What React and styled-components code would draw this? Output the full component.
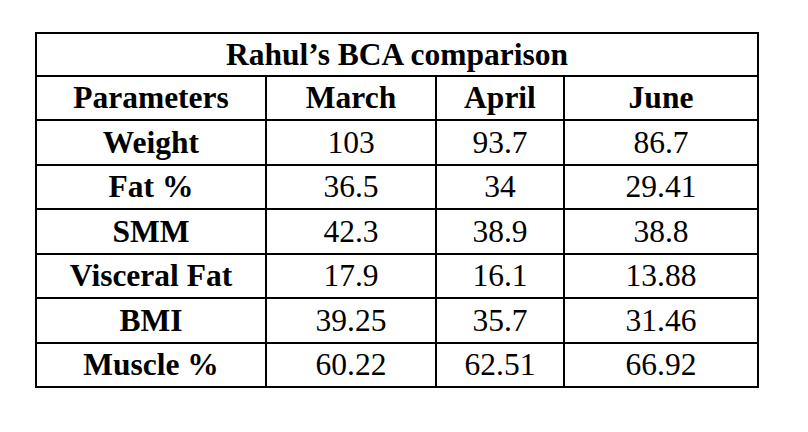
import React from "react";
import styled, { createGlobalStyle } from "styled-components";

const GlobalStyle = createGlobalStyle`
  html, body {
    margin: 0;
    padding: 0;
    background: #fff;
  }
  body {
    font-family: "Liberation Serif", "Times New Roman", serif;
    color: #000;
  }
`;

const Page = styled.div`
  padding: 32px 0 0 35px;
`;

const Table = styled.table`
  border-collapse: collapse;
  table-layout: fixed;
  width: 724px;
  border: 2px solid #000;
  font-size: 31.5px;
`;

const Cell = styled.td`
  border: 2px solid #000;
  height: ${({ tall }) => (tall ? "42.5px" : "42px")};
  padding: 0;
  text-align: center;
  vertical-align: middle;
  line-height: 1;
  font-weight: ${({ bold }) => (bold ? 700 : 400)};
`;

const TitleCell = styled.th`
  border: 2px solid #000;
  height: 41px;
  padding: 0;
  text-align: center;
  font-weight: 700;
  line-height: 1;
`;

const columns = ["Parameters", "March", "April", "June"];

const rows = [
  ["Weight", "103", "93.7", "86.7"],
  ["Fat %", "36.5", "34", "29.41"],
  ["SMM", "42.3", "38.9", "38.8"],
  ["Visceral Fat", "17.9", "16.1", "13.88"],
  ["BMI", "39.25", "35.7", "31.46"],
  ["Muscle %", "60.22", "62.51", "66.92"],
];

const widths = [230, 170, 128, 194];

const App = () => {
  return (
    <Page>
      <GlobalStyle />
      <Table>
        <colgroup>
          {widths.map((w, i) => (
            <col key={i} style={{ width: w }} />
          ))}
        </colgroup>
        <thead>
          <tr>
            <TitleCell colSpan={4}>Rahul’s BCA comparison</TitleCell>
          </tr>
          <tr>
            {columns.map((c) => (
              <Cell as="th" bold key={c}>
                {c}
              </Cell>
            ))}
          </tr>
        </thead>
        <tbody>
          {rows.map((r) => (
            <tr key={r[0]}>
              {r.map((v, i) => (
                <Cell key={i} tall bold={i === 0}>
                  {v}
                </Cell>
              ))}
            </tr>
          ))}
        </tbody>
      </Table>
    </Page>
  );
};

export default App;
